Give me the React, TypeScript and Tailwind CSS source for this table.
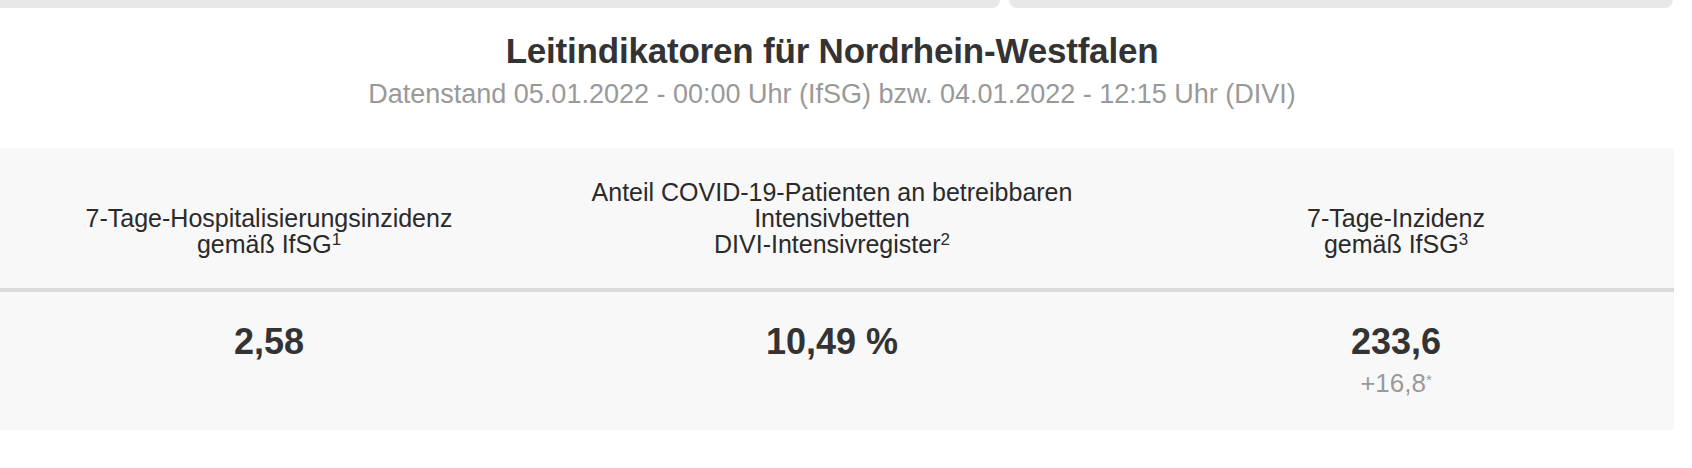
const font = { fontFamily: '"Liberation Sans", Arial, Helvetica, sans-serif' };

type Indicator = {
  label: React.ReactNode;
  value: string;
  change?: string;
  width: string;
};

const indicators: Indicator[] = [
  {
    label: (
      <>
        7-Tage-Hospitalisierungsinzidenz
        <br />
        gemäß IfSG<sup className="text-[17px]">1</sup>
      </>
    ),
    value: '2,58',
    width: 'w-[538px]',
  },
  {
    label: (
      <>
        Anteil COVID-19-Patienten an betreibbaren
        <br />
        Intensivbetten
        <br />
        DIVI-Intensivregister<sup className="text-[17px]">2</sup>
      </>
    ),
    value: '10,49 %',
    width: 'w-[588px]',
  },
  {
    label: (
      <>
        7-Tage-Inzidenz
        <br />
        gemäß IfSG<sup className="text-[17px]">3</sup>
      </>
    ),
    value: '233,6',
    change: '+16,8',
    width: 'w-[540px]',
  },
];

export default function App() {
  return (
    <div className="h-[468px] w-[1692px] overflow-hidden bg-white text-[#333]" style={font}>
      {/* bottoms of the cards above */}
      <div className="flex gap-[9px]">
        <div className="h-2 w-[1000px] rounded-br-[10px] bg-[#e8e8e8]" />
        <div className="h-2 w-[664px] rounded-b-[10px] bg-[#e8e8e8]" />
      </div>

      <header className="w-[1664px] pt-[22px] text-center">
        <h1 className="text-[35px] font-bold leading-[42px] tracking-[-0.2px]">Leitindikatoren für Nordrhein-Westfalen</h1>
        <p className="mt-[6px] text-[27px] leading-[32px] text-[#999]">
          Datenstand 05.01.2022 - 00:00 Uhr (IfSG) bzw. 04.01.2022 - 12:15 Uhr (DIVI)
        </p>
      </header>

      <section className="mt-[38px] w-[1674px] bg-[#f8f8f8]">
        <div className="flex border-b-4 border-[#dcdcdc]">
          {indicators.map((item, i) => (
            <div
              key={i}
              className={`${item.width} flex h-[140px] items-end justify-center pb-[31px] text-center text-[25px] leading-[26px] text-[#2a2a2a]`}
            >
              <p>{item.label}</p>
            </div>
          ))}
        </div>
        <div className="flex">
          {indicators.map((item, i) => (
            <div key={i} className={`${item.width} h-[138px] pt-[30px] text-center`}>
              <p className="text-[36px] font-bold leading-[40px]">{item.value}</p>
              {item.change && (
                <p className="mt-[7px] text-[26px] leading-[28px] text-[#999]">
                  {item.change}
                  <sup className="text-[15px]">*</sup>
                </p>
              )}
            </div>
          ))}
        </div>
      </section>
    </div>
  );
}
